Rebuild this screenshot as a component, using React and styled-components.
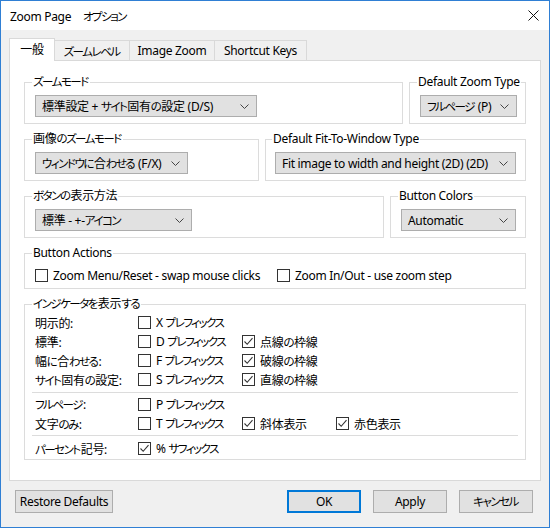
import React from 'react';
import styled, { createGlobalStyle } from 'styled-components';

const GlobalStyle = createGlobalStyle`
	html, body {
		margin: 0;
		padding: 0;
		background: #fff;
	}
	body {
		font-family: "Noto Sans", "Noto Sans CJK JP", sans-serif;
		font-size: 12px;
		letter-spacing: -0.3px;
		font-feature-settings: "palt";
		color: #000;
	}
	* {
		box-sizing: border-box;
	}
`;

const Kana = styled.span`
	font-size: 11.5px;
	letter-spacing: -1.5px;
	margin-right: 1px;
`;

// narrow the kana runs, the dialog font has much narrower kana than Noto Sans CJK
const ja = (text) =>
	text.split(/([\u3040-\u30ff]+)/).map((part, i) =>
		/^[\u3040-\u30ff]+$/.test(part) ? <Kana key={i}>{part}</Kana> : part
	);

const Window = styled.div`
	width: 550px;
	height: 528px;
	border: 1px solid #2f7fd4;
	background: #f0f0f0;
	display: flex;
	flex-direction: column;
`;

const TitleBar = styled.div`
	height: 29px;
	flex: none;
	background: #fff;
	display: flex;
	align-items: center;
	justify-content: space-between;
	padding: 0 10px 0 9px;
	white-space: pre;
`;

const Body = styled.div`
	padding: 8px 8px 0 8px;
	display: flex;
	flex-direction: column;
`;

const TabStrip = styled.div`
	display: flex;
	align-items: flex-end;
	height: 23px;
	margin-bottom: -1px;
`;

const Tab = styled.div`
	position: relative;
	width: ${(p) => p.$w}px;
	height: ${(p) => (p.$active ? 23 : 21)}px;
	margin-left: ${(p) => (p.$first ? 0 : -1)}px;
	border: 1px solid #d9d9d9;
	border-bottom: ${(p) => (p.$active ? 'none' : '1px solid #d9d9d9')};
	background: ${(p) => (p.$active ? '#fff' : '#f0f0f0')};
	z-index: ${(p) => (p.$active ? 2 : 1)};
	display: flex;
	align-items: center;
	justify-content: center;
	padding-bottom: ${(p) => (p.$active ? 2 : 0)}px;
	white-space: nowrap;
`;

const Panel = styled.div`
	width: 532px;
	height: 421px;
	border: 1px solid #d9d9d9;
	background: #fff;
	padding: 13px 14px 0 14px;
	display: flex;
	flex-direction: column;
	gap: 7px;
`;

const Row = styled.div`
	display: flex;
	gap: 6px;
`;

const Group = styled.fieldset`
	margin: 0;
	min-width: 0;
	flex: ${(p) => (p.$w ? `0 0 ${p.$w}px` : p.$grow ? '1 1 auto' : 'none')};
	border: 1px solid #dcdcdc;
	padding: ${(p) => p.$pad || '5px 10px 6px 10px'};

	& > legend {
		padding: 0 1px;
		margin-left: -3px;
		line-height: 16px;
		white-space: nowrap;
	}
`;

const SelectBox = styled.div`
	width: ${(p) => p.$w}px;
	height: 22px;
	background: #e1e1e1;
	border: 1px solid #adadad;
	display: flex;
	align-items: center;
	justify-content: space-between;
	padding: 0 7px 0 6px;
	white-space: nowrap;
`;

const CheckRow = styled.div`
	display: grid;
	grid-template-columns: ${(p) => p.$cols};
	height: 19px;
	align-items: center;
	white-space: nowrap;
`;

const CheckItem = styled.label`
	display: flex;
	align-items: center;
	gap: 5px;
	white-space: nowrap;
`;

const Box = styled.span`
	width: 13px;
	height: 13px;
	flex: none;
	border: 1px solid #333;
	background: #fff;
	display: flex;
	align-items: center;
	justify-content: center;
`;

const Separator = styled.div`
	height: 1px;
	background: #dcdcdc;
	margin: ${(p) => p.$m || '3px -3px 2px -3px'};
`;

const ButtonBar = styled.div`
	display: flex;
	align-items: center;
	margin-top: 9px;
	padding: 0 8px 0 6px;
	gap: 12px;
`;

const Button = styled.button`
	width: ${(p) => p.$w}px;
	height: 23px;
	font: inherit;
	letter-spacing: inherit;
	color: #000;
	background: #e1e1e1;
	border: 1px solid ${(p) => (p.$default ? '#0078d7' : '#adadad')};
	box-shadow: ${(p) => (p.$default ? 'inset 0 0 0 1px #0078d7' : 'none')};
	padding: 0;
	margin-right: ${(p) => (p.$push ? 'auto' : '0')};
	white-space: nowrap;
`;

const Chevron = () => (
	<svg width="9" height="5" viewBox="0 0 9 5">
		<path d="M0.5 0.5 L4.5 4.5 L8.5 0.5" fill="none" stroke="#444" strokeWidth="1" />
	</svg>
);

const CloseIcon = () => (
	<svg width="11" height="11" viewBox="0 0 11 11">
		<path d="M0.5 0.5 L10.5 10.5 M10.5 0.5 L0.5 10.5" stroke="#111" strokeWidth="1" />
	</svg>
);

const Check = ({ checked, children }) => (
	<CheckItem>
		<Box>
			{checked && (
				<svg width="11" height="11" viewBox="0 0 11 11">
					<path d="M1.5 5.5 L4.2 8.3 L9.5 2.2" fill="none" stroke="#333" strokeWidth="1.1" />
				</svg>
			)}
		</Box>
		<span>{ja(children)}</span>
	</CheckItem>
);

const Select = ({ w, children }) => (
	<SelectBox $w={w}>
		<span>{ja(children)}</span>
		<Chevron />
	</SelectBox>
);

const tabs = [
	{ name: '一般', w: 46, active: true },
	{ name: 'ズームレベル', w: 76 },
	{ name: 'Image Zoom', w: 86 },
	{ name: 'Shortcut Keys', w: 93 },
];

const indicatorCols = '103px 104px 94px 1fr';

const indicatorBlocks = [
	[
		{ label: '明示的:', items: [[false, 'X プレフィックス']] },
		{ label: '標準:', items: [[false, 'D プレフィックス'], [true, '点線の枠線']] },
		{ label: '幅に合わせる:', items: [[false, 'F プレフィックス'], [true, '破線の枠線']] },
		{ label: 'サイト固有の設定:', items: [[false, 'S プレフィックス'], [true, '直線の枠線']] },
	],
	[
		{ label: 'フルページ:', items: [[false, 'P プレフィックス']] },
		{ label: '文字のみ:', items: [[false, 'T プレフィックス'], [true, '斜体表示'], [true, '赤色表示']] },
	],
	[{ label: 'パーセント記号:', items: [[true, '% サフィックス']] }],
];

const App = () => {
	return (
		<>
			<GlobalStyle />
			<Window>
				<TitleBar>
					<span>Zoom Page　{ja('オプション')}</span>
					<CloseIcon />
				</TitleBar>
				<Body>
					<TabStrip>
						{tabs.map((t, i) => (
							<Tab key={t.name} $w={t.w} $active={t.active} $first={i === 0}>
								{ja(t.name)}
							</Tab>
						))}
					</TabStrip>
					<Panel>
						<Row>
							<Group $grow>
								<legend>{ja('ズームモード')}</legend>
								<Select w={222}>標準設定 + サイト固有の設定 (D/S)</Select>
							</Group>
							<Group $w={117}>
								<legend>Default Zoom Type</legend>
								<Select w={97}>フルページ (P)</Select>
							</Group>
						</Row>
						<Row>
							<Group $w={235}>
								<legend>{ja('画像のズームモード')}</legend>
								<Select w={153}>ウィンドウに合わせる (F/X)</Select>
							</Group>
							<Group $grow $pad="5px 9px 6px 9px">
								<legend>Default Fit-To-Window Type</legend>
								<Select w={241}>Fit image to width and height (2D)  (2D)</Select>
							</Group>
						</Row>
						<Row>
							<Group $grow>
								<legend>{ja('ボタンの表示方法')}</legend>
								<Select w={157}>標準 - +-アイコン</Select>
							</Group>
							<Group $w={136}>
								<legend>Button Colors</legend>
								<Select w={115}>Automatic</Select>
							</Group>
						</Row>
						<Group $pad="5px 10px 3px 10px">
							<legend>Button Actions</legend>
							<CheckRow $cols="242px 1fr">
								<Check>Zoom Menu/Reset - swap mouse clicks</Check>
								<Check>Zoom In/Out - use zoom step</Check>
							</CheckRow>
						</Group>
						<Group $pad="1px 10px 1px 10px">
							<legend>{ja('インジケータを表示する')}</legend>
							{indicatorBlocks.map((block, bi) => (
								<React.Fragment key={bi}>
									{bi > 0 && <Separator $m={bi === 1 ? '3px -3px 2px -3px' : '2px -3px 3px -3px'} />}
									{block.map((row) => (
										<CheckRow key={row.label} $cols={indicatorCols}>
											<span>{ja(row.label)}</span>
											{row.items.map(([c, t]) => (
												<Check key={t} checked={c}>
													{t}
												</Check>
											))}
										</CheckRow>
									))}
								</React.Fragment>
							))}
						</Group>
					</Panel>
					<ButtonBar>
						<Button $w={98} $push>
							Restore Defaults
						</Button>
						<Button $w={74} $default>
							OK
						</Button>
						<Button $w={74}>Apply</Button>
						<Button $w={74}>{ja('キャンセル')}</Button>
					</ButtonBar>
				</Body>
			</Window>
		</>
	);
};

export default App;
